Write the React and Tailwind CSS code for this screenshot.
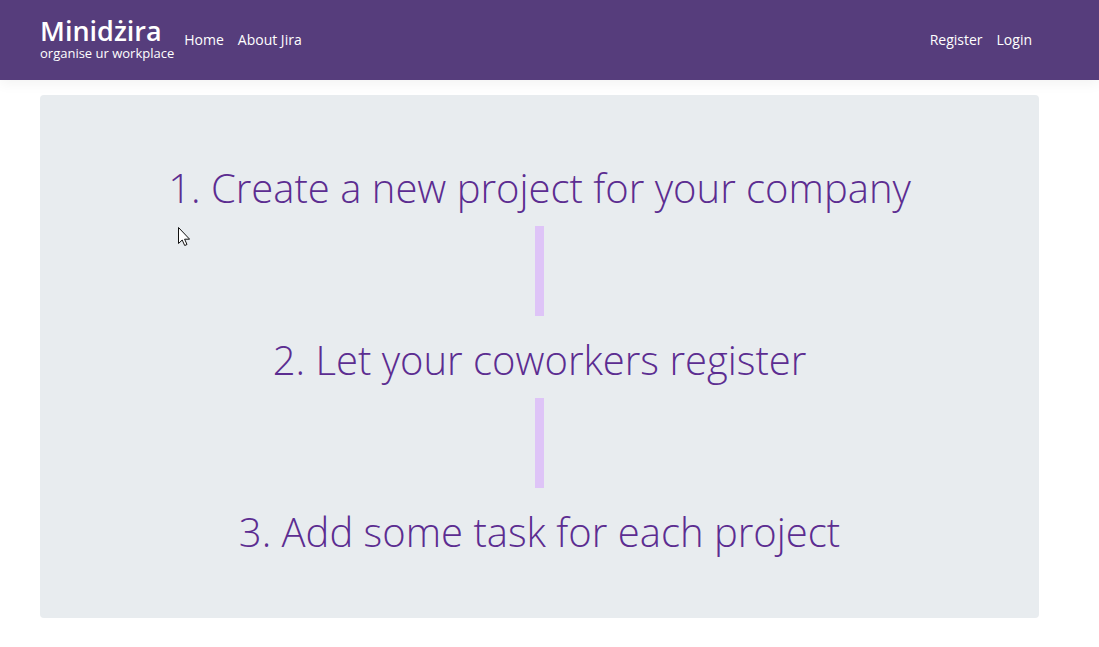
const steps = [
  '1. Create a new project for your company',
  '2. Let your coworkers register',
  '3. Add some task for each project',
];

function NavLink({ children, href }) {
  return (
    <a href={href} className="text-sm leading-5 font-medium text-white">
      {children}
    </a>
  );
}

function Header() {
  return (
    <header className="flex h-20 items-center bg-[#563d7c] pr-[67px] pl-10 shadow-[0_4px_12px_rgba(0,0,0,0.05)]">
      <a href="#home" className="flex flex-col pb-0.5 text-white">
        <span className="text-[27px] leading-7 font-semibold">Minidżira</span>
        <span className="text-[13px] leading-4">organise ur workplace</span>
      </a>
      <nav className="ml-2.5 flex flex-1 items-center gap-[14px]">
        <NavLink href="#home">Home</NavLink>
        <NavLink href="#about">About Jira</NavLink>
        <div className="ml-auto flex gap-[14px]">
          <NavLink href="#register">Register</NavLink>
          <NavLink href="#login">Login</NavLink>
        </div>
      </nav>
    </header>
  );
}

function Cursor() {
  return (
    <svg viewBox="0 0 12 20" className="absolute top-[226px] left-[178px] h-5 w-3" aria-hidden="true">
      <path d="M.5 1.5v16l3.7-3.5 2.5 5.5 2.3-1-2.4-5.3h5z" fill="white" stroke="#111" />
    </svg>
  );
}

export default function App() {
  return (
    <div className="min-h-screen bg-white font-['Open_Sans',sans-serif]">
      <Header />
      <main className="mt-[15px] mr-[60px] ml-10 rounded bg-[#e8ecef] px-8 pt-16 pb-[57px]">
        <ol className="flex flex-col items-center">
          {steps.map((step, i) => (
            <li key={step} className="flex flex-col items-center">
              {i > 0 && <span className="mt-[9px] mb-[15px] h-[90px] w-[9px] bg-[#dec4f7]" />}
              <h2 className="text-center text-[40px] leading-[58px] font-light text-[#5c2d91]">{step}</h2>
            </li>
          ))}
        </ol>
      </main>
      <Cursor />
    </div>
  );
}
